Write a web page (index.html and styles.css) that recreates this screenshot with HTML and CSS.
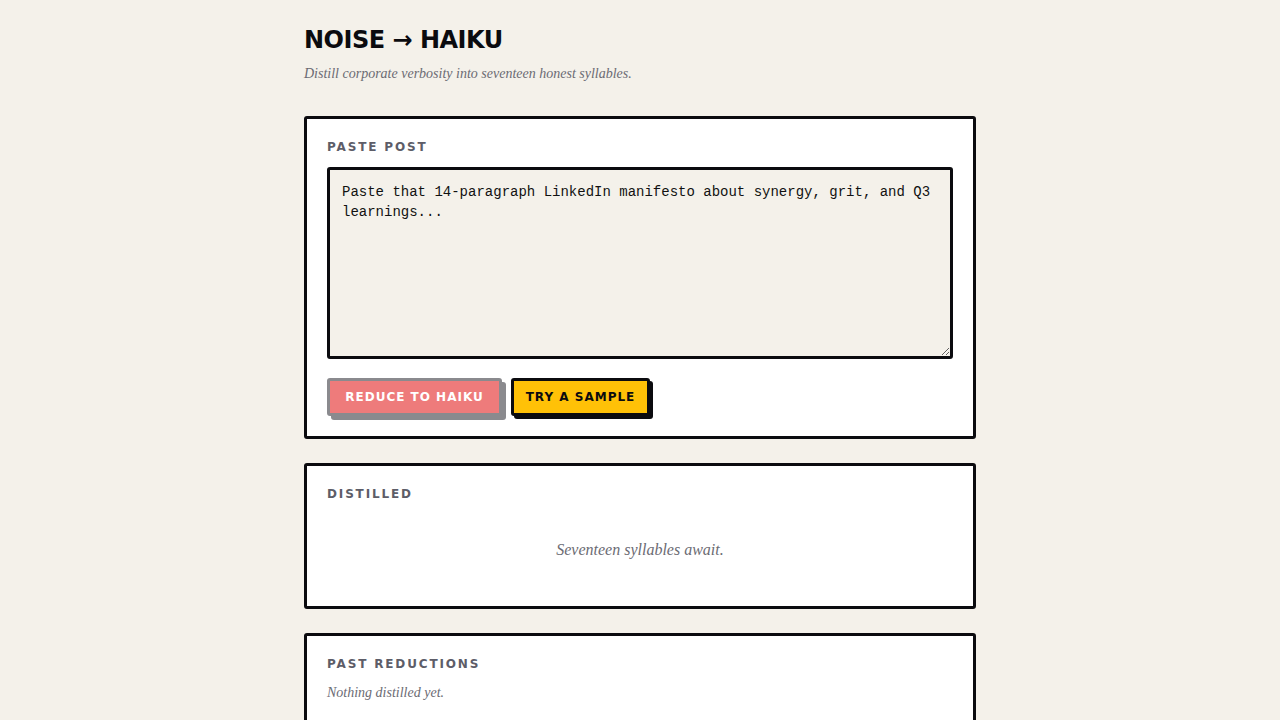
FILE: index.html
```html
<!DOCTYPE html>
<html lang="en">
<head>
<meta charset="utf-8">
<title>Noise → Haiku</title>
<link rel="stylesheet" href="styles.css">
</head>
<body>
<main class="wrap">
  <header class="head">
    <h1 class="title">NOISE → HAIKU</h1>
    <p class="subtitle">Distill corporate verbosity into seventeen honest syllables.</p>
  </header>

  <section class="card">
    <h2 class="label">PASTE POST</h2>
    <textarea class="input" placeholder="Paste that 14-paragraph LinkedIn manifesto about synergy, grit, and Q3 learnings..."></textarea>
    <div class="actions">
      <button class="btn btn-reduce" disabled>REDUCE TO HAIKU</button>
      <button class="btn btn-sample">TRY A SAMPLE</button>
    </div>
  </section>

  <section class="card card-out">
    <h2 class="label">DISTILLED</h2>
    <p class="await">Seventeen syllables await.</p>
  </section>

  <section class="card card-past">
    <h2 class="label">PAST REDUCTIONS</h2>
    <p class="empty">Nothing distilled yet.</p>
  </section>
</main>
</body>
</html>
```
FILE: styles.css
```css
* { box-sizing: border-box; }
html, body { margin: 0; padding: 0; }
body {
  background: #f4f1ea;
  color: #111;
  font-family: "DejaVu Sans", sans-serif;
}
.wrap {
  width: 672px;
  margin: 0 auto;
  padding: 24px 0 40px;
}
.head { margin-bottom: 33px; }
.title {
  margin: 0;
  font-family: "DejaVu Sans", sans-serif;
  font-weight: 700;
  font-size: 24px;
  line-height: 32px;
  color: #0b0b0f;
  letter-spacing: -0.5px;
}
.subtitle {
  margin: 9px 0 0;
  font-family: "Liberation Serif", serif;
  font-style: italic;
  font-size: 14px;
  line-height: 18px;
  color: #6b6b73;
}
.card {
  background: #fff;
  border: 3px solid #0b0b0f;
  border-radius: 3px;
  padding: 20px 20px 20px;
  margin-bottom: 24px;
}
.label {
  margin: 0 0 12px;
  font-family: "DejaVu Sans", sans-serif;
  font-weight: 700;
  font-size: 12px;
  line-height: 16px;
  letter-spacing: 1.85px;
  color: #5d5d68;
}
.input {
  display: block;
  width: 100%;
  height: 192px;
  background: #f4f1ea;
  border: 3px solid #0b0b0f;
  border-radius: 3px;
  padding: 12px;
  margin: 0;
  font-family: "Liberation Mono", monospace;
  font-size: 14px;
  line-height: 20px;
  color: #111;
  resize: vertical;
  outline: none;
}
.input::placeholder { color: #111; opacity: 1; }
.actions {
  display: flex;
  gap: 9px;
  margin-top: 19px;
}
.btn {
  font-family: "DejaVu Sans", sans-serif;
  font-weight: 700;
  font-size: 12px;
  letter-spacing: 1px;
  height: 38px;
  border-radius: 3px;
  border: 3px solid #0b0b0f;
  cursor: pointer;
  padding: 0;
}
.btn-reduce {
  width: 175px;
  background: #ee7b7b;
  color: #fff;
  border-color: #8a8a8e;
  box-shadow: 4px 4px 0 #8a8a8e;
}
.btn-sample {
  width: 139px;
  background: #ffc107;
  color: #0b0b0f;
  box-shadow: 3px 3px 0 #0b0b0f;
}
.await {
  margin: 37px 0 25px;
  text-align: center;
  font-family: "Liberation Serif", serif;
  font-style: italic;
  font-size: 16px;
  line-height: 22px;
  color: #6b6b73;
}
.empty {
  margin: 0;
  font-family: "Liberation Serif", serif;
  font-style: italic;
  font-size: 14px;
  line-height: 18px;
  color: #6b6b73;
}
```
